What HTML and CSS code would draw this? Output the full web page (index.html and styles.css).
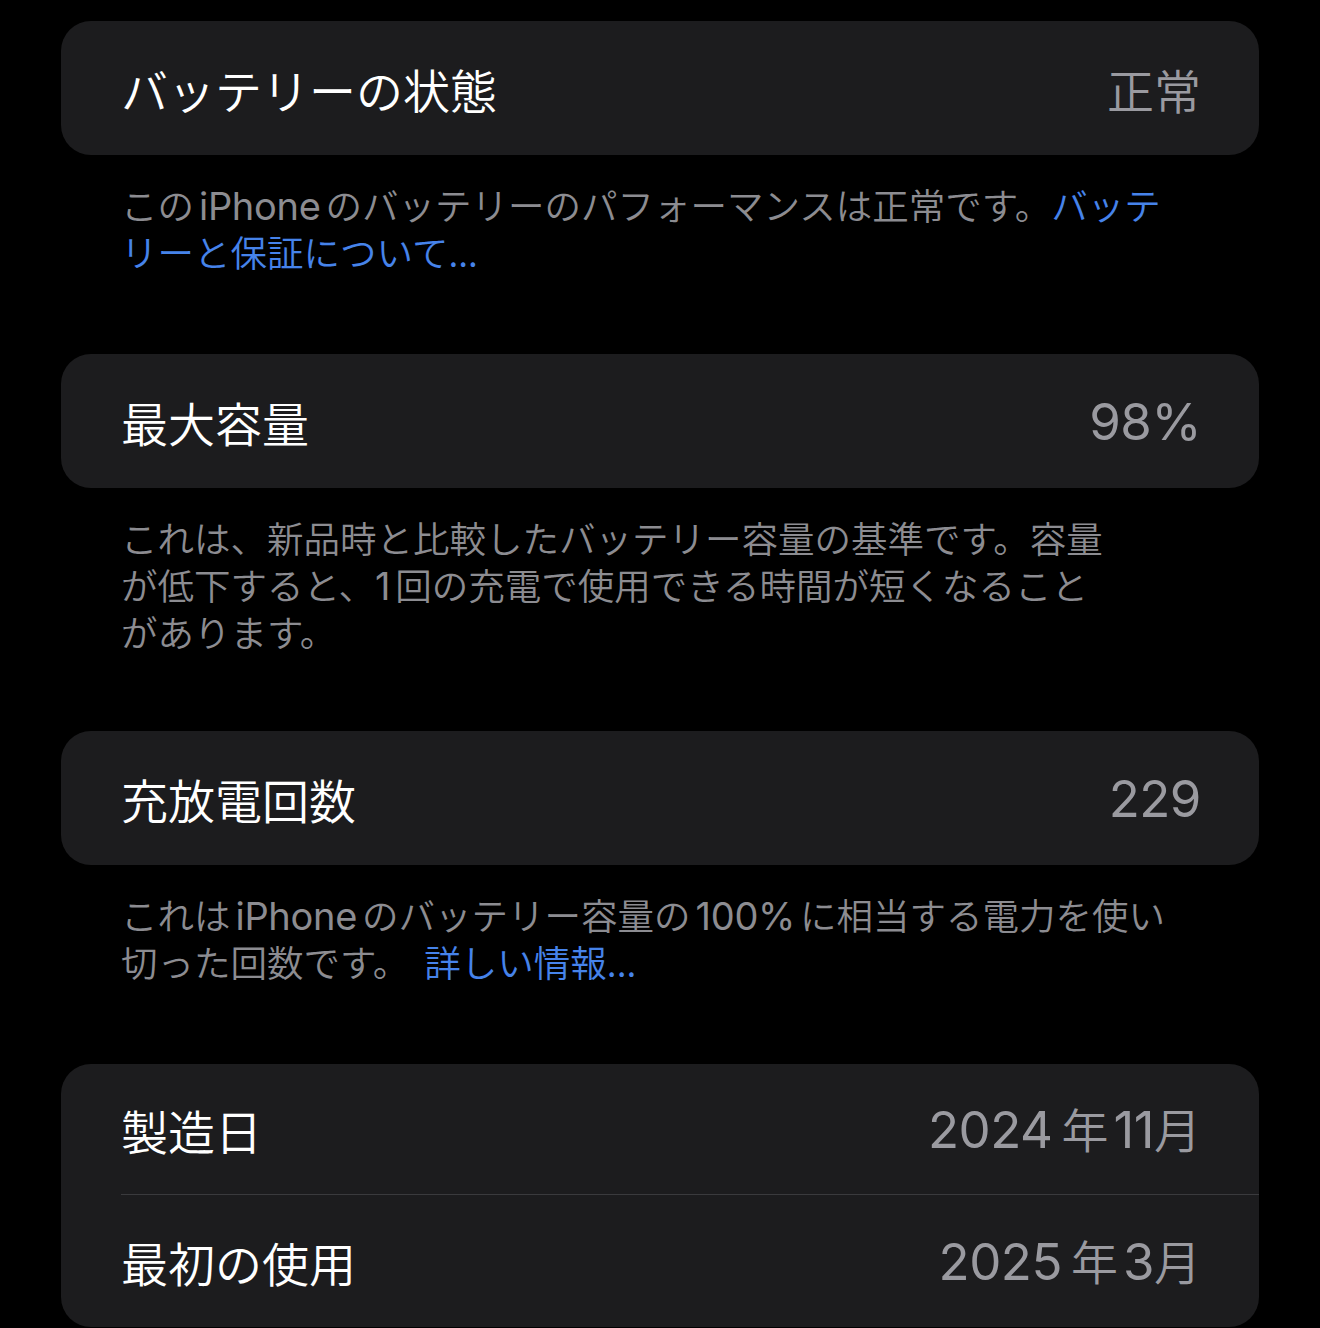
FILE: index.html
```html
<!DOCTYPE html>
<html lang="ja">
<head>
<meta charset="utf-8">
<title>バッテリーの状態</title>
<link rel="stylesheet" href="styles.css">
</head>
<body>
<main class="page">
  <section class="card">
    <div class="row">
      <span class="label">バッテリーの状態</span>
      <span class="value">正常</span>
    </div>
  </section>
  <p class="footer">この<span class="lat">iPhone</span>のバッテリーのパフォーマンスは正常です。<a class="link">バッテ<br>リーと保証について...</a></p>

  <section class="card">
    <div class="row">
      <span class="label">最大容量</span>
      <span class="value num">98%</span>
    </div>
  </section>
  <p class="footer three">これは、新品時と比較したバッテリー容量の基準です。容量<br>が低下すると、<span class="lat first">1</span>回の充電で使用できる時間が短くなること<br>があります。</p>

  <section class="card">
    <div class="row">
      <span class="label">充放電回数</span>
      <span class="value num">229</span>
    </div>
  </section>
  <p class="footer">これは<span class="lat">iPhone</span>のバッテリー容量の<span class="lat">100%</span>に相当する電力を使い<br>切った回数です。<a class="link more">詳しい情報...</a></p>

  <section class="card group">
    <div class="row">
      <span class="label">製造日</span>
      <span class="value"><span class="num year">2024</span>年<span class="num month">11</span>月</span>
    </div>
    <div class="row">
      <span class="label">最初の使用</span>
      <span class="value"><span class="num year">2025</span>年<span class="num month">3</span>月</span>
    </div>
  </section>
</main>
</body>
</html>
```

FILE: styles.css
```css
html, body {
  margin: 0;
  padding: 0;
  background: #000;
  height: 1328px;
  overflow: hidden;
}

.page {
  padding: 21px 61px 0 61px;
  font-family: "Noto Sans CJK JP DemiLight", "Noto Sans CJK JP", "Noto Sans", sans-serif;
}

.card {
  background: #1c1c1e;
  border-radius: 30px;
  overflow: hidden;
}

.row {
  display: flex;
  justify-content: space-between;
  align-items: center;
  height: 134px;
  margin-left: 60px;
  padding-right: 58px;
}

.group .row {
  height: 130px;
}

.group .row + .row {
  height: 132px;
}

.row + .row {
  border-top: 1px solid #3a3a3d;
}

.label {
  color: #ffffff;
  font-size: 47px;
  line-height: 1;
  font-weight: 400;
}

.value {
  color: #9a9aa0;
  font-size: 47px;
  line-height: 1;
  font-weight: 400;
}

.num {
  font-family: "Inter", "Noto Sans CJK JP", sans-serif;
  font-size: 51px;
  font-weight: 400;
  letter-spacing: -0.5px;
}

.value .num.year {
  margin-right: 9px;
}

.value .num.month {
  margin-left: 5px;
}

.footer {
  margin: 0;
  padding: 26px 60px 79px 60px;
  color: #8c8c91;
  font-size: 36.5px;
  line-height: 47px;
  font-weight: 400;
}

.footer.three {
  padding-bottom: 76px;
}

.lat {
  font-family: "Inter", "Noto Sans CJK JP", sans-serif;
  font-size: 38px;
  line-height: 1;
  font-weight: 400;
  letter-spacing: -0.3px;
  margin: 0 5px;
}

.lat.first {
  margin-left: 0;
}

.link {
  color: #4683ea;
  text-decoration: none;
}

.link.more {
  margin-left: 15px;
}
```
